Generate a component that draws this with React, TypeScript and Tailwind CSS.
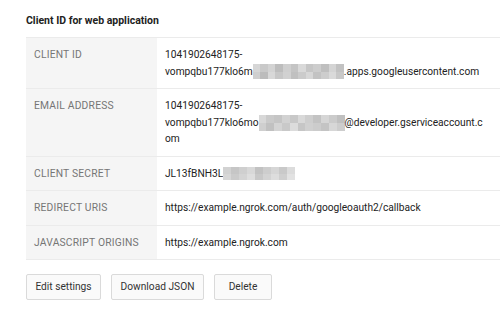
import React from "react";

const shadesA = [
  "#d6d6d6", "#c9c9c9", "#d3d3d3", "#bdbdbd", "#cfcfcf", "#c4c4c4", "#d9d9d9", "#c6c6c6", "#cdcdcd", "#bfbfbf", "#d4d4d4", "#c2c2c2",
  "#cfcfcf", "#bcbcbc", "#d8d8d8", "#c7c7c7", "#d1d1d1", "#c0c0c0", "#cbcbcb", "#d7d7d7", "#c3c3c3", "#cdcdcd", "#dadada", "#c8c8c8",
];
const shadesB = [
  "#d8d8d8", "#cacaca", "#c5c5c5", "#d2d2d2", "#c8c8c8", "#d9d9d9", "#cecece", "#c3c3c3", "#d6d6d6", "#cbcbcb", "#c0c0c0",
  "#cfcfcf", "#c1c1c1", "#d4d4d4", "#c9c9c9", "#dcdcdc", "#c6c6c6", "#d0d0d0", "#cccccc", "#c4c4c4", "#d7d7d7", "#cdcdcd",
];
const shadesC = [
  "#d2d2d2", "#c6c6c6", "#cfcfcf", "#d8d8d8", "#c2c2c2", "#cdcdcd", "#d6d6d6", "#c9c9c9", "#dcdcdc",
  "#d7d7d7", "#cbcbcb", "#d4d4d4", "#dedede", "#c8c8c8", "#d3d3d3", "#dddddd", "#cfcfcf", "#e2e2e2",
];

function Mosaic({ w, h, cols, shades }: { w: number; h: number; cols: number; shades: string[] }) {
  const rows = 2;
  const bw = w / cols;
  const bh = h / rows;
  return (
    <span className="inline-flex flex-wrap align-middle" style={{ width: w, height: h }}>
      {shades.slice(0, rows * cols).map((c, i) => (
        <span key={i} className="block" style={{ width: bw, height: bh, background: c }} />
      ))}
    </span>
  );
}

function Row({ label, children }: { label: string; children: React.ReactNode }) {
  return (
    <div className="flex border-b border-[#ebebeb]">
      <div className="w-[131px] shrink-0 bg-[#f5f5f5] pl-[8px] pt-[9px] pb-[8px] leading-[16.5px] text-[#757575] text-[10.3px] tracking-[0.2px]">
        {label}
      </div>
      <div className="flex-1 pl-[8px] pt-[9px] pb-[8px] leading-[16.5px] text-[#222] text-[10.2px] whitespace-nowrap">
        {children}
      </div>
    </div>
  );
}

export default function App() {
  return (
    <div className="w-[500px] h-[313px] bg-white overflow-hidden font-['Roboto',_'Liberation_Sans',_sans-serif] pl-[26px]">
      <div className="h-[37px] pt-[14px] text-[10.5px] leading-[13px] font-bold text-[#222]">
        Client ID for web application
      </div>
      <div className="w-[520px] border-t border-[#ebebeb]">
        <Row label="CLIENT ID">
          <div>1041902648175-</div>
          <div className="flex items-center">
            <span>vompqbu177klo6m</span>
            <Mosaic w={91} h={15} cols={12} shades={shadesA} />
            <span>.apps.googleusercontent.com</span>
          </div>
        </Row>
        <Row label="EMAIL ADDRESS">
          <div>1041902648175-</div>
          <div className="flex items-center">
            <span>vompqbu177klo6mo</span>
            <Mosaic w={86} h={16} cols={11} shades={shadesB} />
            <span>@developer.gserviceaccount.c</span>
          </div>
          <div>om</div>
        </Row>
        <Row label="CLIENT SECRET">
          <div className="flex items-center">
            <span>JL13fBNH3L</span>
            <Mosaic w={72} h={13} cols={9} shades={shadesC} />
          </div>
        </Row>
        <Row label="REDIRECT URIS">
          <div>https://example.ngrok.com/auth/googleoauth2/callback</div>
        </Row>
        <Row label="JAVASCRIPT ORIGINS">
          <div>https://example.ngrok.com</div>
        </Row>
      </div>
      <div className="flex gap-[10px] mt-[14px]">
        {[
          ["Edit settings", "w-[75px]"],
          ["Download JSON", "w-[93px]"],
          ["Delete", "w-[58px]"],
        ].map(([t, w]) => (
          <button
            key={t}
            className={`${w} h-[26px] border border-[#dadada] rounded-[2px] bg-[#fafafa] text-[10.2px] text-[#333] flex items-center justify-center`}
          >
            {t}
          </button>
        ))}
      </div>
    </div>
  );
}
